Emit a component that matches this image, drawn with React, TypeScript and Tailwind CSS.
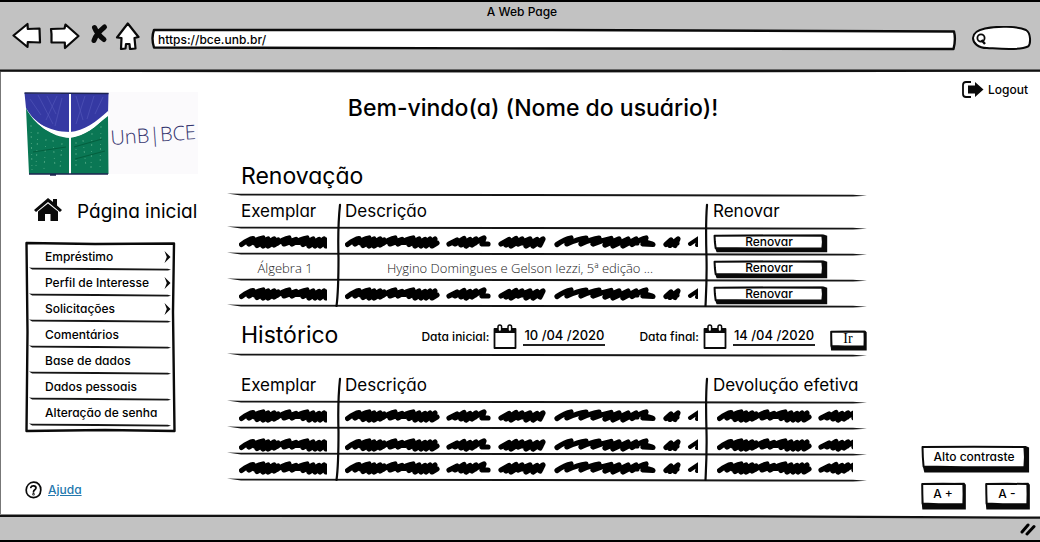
import React from "react";

const INK = "#0a0a0a";

function ButtonFrame() {
  return (
    <svg
      aria-hidden="true"
      className="pointer-events-none absolute inset-0 h-full w-full overflow-visible"
      viewBox="0 0 100 100"
      preserveAspectRatio="none"
    >
      <path
        d="M3 8 L99.5 4 L102 10 L102 116 L3 116 L2 96Z"
        fill={INK}
        stroke={INK}
        strokeWidth="2"
        vectorEffect="non-scaling-stroke"
      />
      <path
        d="M0.5 5 L50 3 L98.5 5 L99 50 L98.5 97 L40 97 L1.5 93 L0.8 50Z"
        fill="#fff"
        stroke={INK}
        strokeWidth="2"
        strokeLinejoin="round"
        vectorEffect="non-scaling-stroke"
      />
    </svg>
  );
}

function SketchButton({ className, children }: { className: string; children: React.ReactNode }) {
  return (
    <button type="button" className={`relative cursor-pointer whitespace-nowrap text-center ${className}`}>
      <ButtonFrame />
      <span className="relative">{children}</span>
    </button>
  );
}

function Rule() {
  return (
    <svg
      aria-hidden="true"
      className="pointer-events-none absolute -bottom-px left-0 h-1 w-full"
      viewBox="0 0 640 4"
      preserveAspectRatio="none"
    >
      <path d="M0 0.6 L14 0.8 L300 0.9 L626 1.8 L640 2.8 L626 3.6 L300 3 L14 2.5Z" fill="#161616" />
    </svg>
  );
}

function Dividers() {
  return (
    <svg
      aria-hidden="true"
      className="pointer-events-none absolute inset-0 h-full w-full"
      viewBox="0 0 640 112"
      preserveAspectRatio="none"
      fill="none"
      stroke={INK}
      strokeWidth="2.2"
      strokeLinecap="round"
    >
      <path d="M113 9 C111 28 111 45 111.500 62 C111.500 85 111 100 109.500 111" vectorEffect="non-scaling-stroke" />
      <path d="M480 9 C478.500 28 479 45 479.500 62 C480 85 479 100 478.500 111" vectorEffect="non-scaling-stroke" />
    </svg>
  );
}

function Scribble() {
  return (
    <div className="w-full overflow-hidden">
      <svg
        role="img"
        aria-label="Texto rabiscado"
        className="block"
        width="353"
        height="14"
        viewBox="0 0 353 14"
        fill="none"
        stroke="#000"
        strokeWidth="5.200"
        strokeLinecap="round"
        strokeLinejoin="round"
      >
        <path d="M2.500 9.500 Q10 4 14 3.500 L10 9 Q18 4 24 3 L18 10.500 L29 4 L24 11 L35 4 L29 11 L39 5 L35 10 Q45 4 50 3 L45 9 L57 4.500 L53 9 Q62 4 68 3 L64 9.500 L74 4 L70 11 L80 4.500 L76 11 L85 4 L81 11 L90 4 L87 11 L92 8" />
        <path d="M16 8 H38 M46 7.500 H60 M66 8 H90" />
        <path d="M104 9 L112 5 L110 9 L119 3.500 L116 10 L125 4.500 L121 11 L131 4 L127 10 Q134 5 139 3 L137 9 L143 9 M106 8 H130" />
        <path d="M156 9 L164 4.500 L161 10 L171 3.500 L166 11 L177 4 L173 9 L185 4 L181 11 L192 4.500 L188 11 L198 4 L195 10 M160 8 H196" />
        <path d="M212 9.500 Q220 4 226 3 L222 9 Q233 4 241 3 L236 9 Q247 4 254 3 L248 9 Q258 5 266 3.500 L260 10 L274 4 L268 11 L283 4 L278 11 L291 4 L287 9.500 Q296 4 301 3 L298 9 L308 9.500 M262 8 H292 M300 7 L307 9" />
        <path d="M321 9.500 L326 5 L325 10.500 L333 4 L330 10.500 M323 8 H332" />
        <path d="M345 9 L354 3 L352 10" strokeWidth="4" />
      </svg>
    </div>
  );
}

function Calendar() {
  return (
    <svg aria-hidden="true" className="shrink-0" width="24" height="26" viewBox="0 0 24 26">
      <path d="M1.500 5 H22.500 V24 H1.500Z" fill="#fff" stroke={INK} strokeWidth="1.800" strokeLinejoin="round" />
      <path d="M1 4.500 H23 V9 H1Z" fill={INK} />
      <rect x="5" y="1" width="3.600" height="6.500" rx="1.800" fill="#fff" stroke={INK} strokeWidth="1.500" />
      <rect x="15" y="1" width="3.600" height="6.500" rx="1.800" fill="#fff" stroke={INK} strokeWidth="1.500" />
    </svg>
  );
}

function DateField({ id, label, value }: { id: string; label: string; value: string }) {
  return (
    <div className="flex items-center">
      <label htmlFor={id} className="mr-1 whitespace-nowrap text-xs font-medium">
        {label}
      </label>
      <Calendar />
      <input
        id={id}
        defaultValue={value}
        className="ml-1.5 h-[18px] w-[82px] border-b-2 border-[#222] bg-transparent text-center text-[13px] font-medium outline-none"
      />
    </div>
  );
}

function BrowserBar() {
  return (
    <header className="relative border-t-2 border-black bg-[#c2c2c2] pb-[22px] pl-3 pr-2">
      <p className="text-center text-xs leading-5 font-medium">A Web Page</p>
      <div className="flex items-center">
        <svg aria-hidden="true" className="shrink-0" width="128" height="28" viewBox="0 0 128 28" fill="#fff" stroke={INK} strokeWidth="2.200" strokeLinejoin="round">
          <path d="M1.500 13.500 L15.500 2 L15.800 7 L27.500 6.500 L28 20.500 L15.800 20 L15.500 25Z" />
          <path d="M39 7 L52.500 6.500 L53.500 2.500 L66.500 14 L53 26 L52.800 20.500 L39.500 20.500 L39.500 12Z" />
          <path d="M82.500 5.500 Q85 12 92 17.500 M92.500 5 Q84 12 82 18.500" fill="none" strokeWidth="5" strokeLinecap="round" />
          <path d="M115.800 1.500 L126.500 15 L122.500 16 L123.500 26.500 L118 27 L117.500 22 L114 22 L113.500 26.500 L109 27 L109.500 16 L105 15.500Z" />
        </svg>
        <div className="relative ml-3 mt-1.5 h-5 flex-1">
          <svg aria-hidden="true" className="absolute inset-0 h-full w-full overflow-visible" viewBox="0 0 800 20" preserveAspectRatio="none">
            <path
              d="M2 1 L400 1 L802 2.500 Q804 10 801.500 20 L400 19.500 L2 18.500 Q-1 9 2 1Z"
              fill="#fff"
              stroke={INK}
              strokeWidth="2.400"
              strokeLinejoin="round"
              vectorEffect="non-scaling-stroke"
            />
          </svg>
          <input
            aria-label="Endereço"
            defaultValue="https://bce.unb.br/"
            className="relative block h-5 w-full bg-transparent px-1.5 text-xs font-medium outline-none"
          />
        </div>
        <div className="relative ml-5 mt-1 h-6 w-[60px] shrink-0">
          <svg aria-hidden="true" className="absolute inset-0" width="60" height="24" viewBox="0 0 60 24" fill="#fff" stroke={INK} strokeWidth="2">
            <path d="M13 2.500 C25 0 45 0 54 4 C59 7 59 18 56 20.500 C47 25 25 22.500 15 22 C6 22 1 17 1 12 C1 7 6 4 13 2.500Z" />
            <circle cx="9" cy="12" r="3.600" strokeWidth="1.800" />
            <path d="M9.500 14 L13 18" strokeWidth="2.400" />
          </svg>
          <input aria-label="Buscar" className="relative ml-4 block h-6 w-10 bg-transparent text-xs outline-none" />
        </div>
      </div>
      <svg aria-hidden="true" className="pointer-events-none absolute -bottom-px left-0 h-1 w-full" viewBox="0 0 1040 4" preserveAspectRatio="none">
        <path d="M0 0.500 H1040 V2.800 L500 3.600 L0 2.800Z" fill="#111" />
      </svg>
    </header>
  );
}

function Logo() {
  return (
    <svg role="img" aria-label="UnB BCE" className="ml-[23px] block" width="174" height="86" viewBox="0 0 174 86">
      <rect x="84" y="2" width="90" height="82" fill="#fbfafc" />
      <path d="M0.500 3 L45 4 L84.500 3 L84 24 C72 33 59 43 46 44 C22 43 7 28 2 18Z" fill="#3539a3" />
      <path d="M2 18 C10 34 26 46 46 47 C60 46 72 38 84 24 L84.500 84 L5 84Z" fill="#0a7754" />
      <path d="M2 18 C8 31 24 42 46 42 C60 41 72 32 84 21 L84 26 C72 35 62 46 46 48 C27 47 11 34 2 18Z" fill="#fff" />
      <path d="M46 3 V84" stroke="#fff" strokeWidth="2" />
      <path d="M0.500 3 L84.500 3.500 M5 84 L84 84 M26 85 H32" stroke="#1d2450" strokeWidth="1.500" />
      <path d="M6 9 L17 25 M14 5 L29 34 M23 6 L32 24 M33 6 L22 30 M38 8 L31 36 M52 6 L59 30 M61 6 L52 34 M70 6 L63 29 M79 7 L71 24" stroke="#5054b8" strokeWidth="0.700" />
      <path d="M7 35 L8 80 M14 42 L12 76 M22 49 L20 79 M29 50 L31 77 M38 53 L36 80 M52 52 L52 78 M59 50 L62 77 M68 43 L67 78 M77 36 L76 80" stroke="#45a17d" strokeWidth="1" strokeDasharray="2 5 1 3" fill="none" />
      <path d="M9 62 L42 57 M51 69 L81 61 M50 57 L78 49" stroke="#05603f" strokeWidth="1.200" />
      <text x="87" y="55" transform="rotate(-4 87 55)" fontSize="20" className="font-['Open_Sans',sans-serif] font-light" fill="#34346e">
        UnB|BCE
      </text>
    </svg>
  );
}

const menu = [
  { label: "Empréstimo", nested: true },
  { label: "Perfil de Interesse", nested: true },
  { label: "Solicitações", nested: true },
  { label: "Comentários", nested: false },
  { label: "Base de dados", nested: false },
  { label: "Dados pessoais", nested: false },
  { label: "Alteração de senha", nested: false },
];

function Sidebar() {
  return (
    <aside className="flex w-[227px] shrink-0 flex-col border-l border-[#777] pt-[18px]">
      <Logo />
      <a href="#inicio" className="ml-8 mt-[22px] flex items-center gap-3.5 whitespace-nowrap text-[19px] leading-7">
        <svg aria-hidden="true" width="30" height="26" viewBox="0 0 30 26" fill={INK} className="-mt-1">
          <path d="M15 1 L1 13 L3 15 L15 5 L27 15 L29 13 L24 8.500 V2 H20 V5Z" />
          <path d="M15 6.500 L5 14.500 V24 H12 V17 H17.500 V24 H25 V14.500Z" />
        </svg>
        Página inicial
      </a>
      <nav className="relative ml-6 mt-4 w-[150px] px-1 pb-1.5 pt-0.5">
        <svg aria-hidden="true" className="absolute inset-0 h-full w-full overflow-visible" viewBox="0 0 150 190" preserveAspectRatio="none">
          <path d="M1.500 1 L70 2 L149 1.500 L148 70 L149.500 189 L80 188 L1.500 189 L2.500 90Z" fill="#fff" stroke={INK} strokeWidth="2.400" strokeLinejoin="round" vectorEffect="non-scaling-stroke" />
        </svg>
        <ul className="relative">
          {menu.map((item) => (
            <li key={item.label} className="relative">
              <a href="#menu" className="flex h-[26px] items-center justify-between whitespace-nowrap pl-4 text-xs font-medium">
                {item.label}
                {item.nested && (
                  <svg aria-hidden="true" width="7" height="12" viewBox="0 0 7 12">
                    <path d="M0.500 0 L6.500 6 L0.500 12 L2.800 6Z" fill={INK} />
                  </svg>
                )}
              </a>
              <Rule />
            </li>
          ))}
        </ul>
      </nav>
      <a href="#ajuda" className="mt-auto mb-3.5 ml-6 flex items-center gap-1.5 text-xs leading-5 text-[#2377ad]">
        <svg aria-hidden="true" width="17" height="18" viewBox="0 0 17 18" fill="none" stroke={INK} strokeWidth="1.700" strokeLinecap="round">
          <path d="M8.500 1.200 C13 1 16 4.500 15.800 9 C15.500 14 12.500 16.500 8.500 16.700 C4 16.500 1 13 1.200 9 C1.500 4.500 4.500 1.500 8.500 1.200Z" />
          <path d="M5.800 6.500 C6.500 4 11.200 4.300 11 7 C10.800 9 8.500 8.500 8.500 11" />
          <circle cx="8.500" cy="13.300" r="0.400" />
        </svg>
        <span className="font-medium underline">Ajuda</span>
      </a>
    </aside>
  );
}

function Columns() {
  return (
    <colgroup>
      <col className="w-[17.5%]" />
      <col className="w-[57.5%]" />
      <col className="w-[25%]" />
    </colgroup>
  );
}

function HeadRow({ last }: { last: string }) {
  return (
    <tr className="relative h-[33px] text-left text-[17px] leading-6">
      <th scope="col" className="pb-1 pl-3.5 font-normal">
        Exemplar
        <Rule />
      </th>
      <th scope="col" className="pb-1 pl-1.5 font-normal">Descrição</th>
      <th scope="col" className="whitespace-nowrap pb-1 pl-1.5 font-normal">{last}</th>
    </tr>
  );
}

function Renewals() {
  return (
    <div className="relative">
      <table className="w-full table-fixed border-collapse">
        <Columns />
        <thead>
          <HeadRow last="Renovar" />
        </thead>
        <tbody>
          {[0, 1, 2].map((row) => (
            <tr key={row} className="relative h-[26px] font-['Open_Sans',sans-serif] text-[13px] leading-5 font-light text-[#222]">
              <td className={row === 1 ? "pl-1 text-center" : "pl-3 pr-3"}>
                {row === 1 ? "Álgebra 1" : <Scribble />}
                <Rule />
              </td>
              <td className={row === 1 ? "pr-1.5 text-center" : "pl-1.5 pr-2"}>
                {row === 1 ? "Hygino Domingues e Gelson Iezzi, 5ª edição ..." : <Scribble />}
              </td>
              <td className="pl-[7px]">
                <SketchButton className="block h-3.5 w-[110px] font-['Inter','Liberation_Sans',sans-serif] text-xs leading-3.5 font-medium text-black">
                  Renovar
                </SketchButton>
              </td>
            </tr>
          ))}
        </tbody>
      </table>
      <Dividers />
    </div>
  );
}

function History() {
  return (
    <div className="relative mt-3.5">
      <table className="w-full table-fixed border-collapse">
        <Columns />
        <thead>
          <HeadRow last="Devolução efetiva" />
        </thead>
        <tbody>
          {[0, 1, 2].map((row) => (
            <tr key={row} className="relative h-[26px]">
              <td className={row === 1 ? "pl-3 pr-3 pt-1.5" : "pl-3 pr-3"}>
                <Scribble />
                <Rule />
              </td>
              <td className={row === 1 ? "pl-1.5 pr-2 pt-1.5" : "pl-1.5 pr-2"}>
                <Scribble />
              </td>
              <td className={row === 1 ? "pl-2.5 pr-3.5 pt-1.5" : "pl-2.5 pr-3.5"}>
                <Scribble />
              </td>
            </tr>
          ))}
        </tbody>
      </table>
      <Dividers />
    </div>
  );
}

export default function App() {
  return (
    <div className="flex min-h-screen flex-col bg-white font-['Inter','Liberation_Sans',sans-serif] text-black [font-feature-settings:'cv11']">
      <BrowserBar />
      <div className="flex flex-1">
        <Sidebar />
        <main className="min-w-0 flex-1">
          <h1 className="pr-7 pt-5 text-center text-[23px] leading-8 font-medium">Bem-vindo(a) (Nome do usuário)!</h1>
          <section>
            <h2 className="relative mt-9 pb-1 pl-3.5 text-[23px] leading-8">
              Renovação
              <Rule />
            </h2>
            <Renewals />
          </section>
          <section>
            <div className="relative flex h-[49px] items-center pt-1.5">
              <h2 className="pl-3.5 text-[23px] leading-8">Histórico</h2>
              <form className="ml-auto mt-1 flex items-center">
                <DateField id="data-inicial" label="Data inicial:" value="10 /04 /2020" />
                <div className="w-[34px]" />
                <DateField id="data-final" label="Data final:" value="14 /04 /2020" />
                <SketchButton className="ml-4 mr-0.5 mt-1 h-4 w-[34px] font-['Liberation_Serif',serif] text-sm leading-4">Ir</SketchButton>
              </form>
              <Rule />
            </div>
            <History />
          </section>
        </main>
        <aside className="flex w-[173px] shrink-0 flex-col justify-between pb-[9px] pl-[55px] pr-3 pt-2">
          <a href="#logout" className="flex items-center gap-1 self-end whitespace-nowrap text-xs font-medium">
            <svg aria-hidden="true" width="22" height="19" viewBox="0 0 22 19">
              <path d="M9 2 H4 C2 2 1 3 1 5 V14 C1 16 2 17 4 17 H9" fill="none" stroke={INK} strokeWidth="1.800" />
              <path d="M6 5.500 H13 V2 L21.500 9.500 L13 17 V13.500 H6Z" fill={INK} />
            </svg>
            Logout
          </a>
          <div>
            <SketchButton className="block h-[22px] w-[104px] text-xs font-medium">Alto contraste</SketchButton>
            <div className="mt-[15px] flex justify-between">
              <SketchButton className="h-[22px] w-[42px] text-xs font-medium">A +</SketchButton>
              <SketchButton className="h-[22px] w-[42px] text-xs font-medium">A -</SketchButton>
            </div>
          </div>
        </aside>
      </div>
      <footer className="relative flex h-7 items-center justify-end border-b-2 border-black bg-[#c2c2c2] pr-1">
        <svg aria-hidden="true" className="absolute inset-x-0 top-0 h-1.5 w-full" viewBox="0 0 1040 6" preserveAspectRatio="none">
          <path d="M0 0 H1040 V4 L700 2 L0 1Z" fill="#fff" />
          <path d="M0 0.500 L700 1 L1040 2.500 V4.800 L700 3.300 L0 3Z" fill="#111" />
        </svg>
        <svg aria-hidden="true" className="mt-1" width="16" height="14" viewBox="0 0 16 14" stroke="#000" strokeWidth="3" strokeLinecap="round">
          <path d="M2 10 L8 3 M7 12 L14 4.500" />
        </svg>
      </footer>
    </div>
  );
}
